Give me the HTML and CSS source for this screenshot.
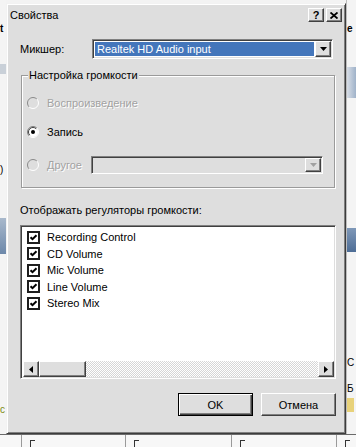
FILE: index.html
```html
<!DOCTYPE html>
<html lang="ru">

<head>
    <meta charset="utf-8">
    <title>Свойства</title>
    <link rel="stylesheet" href="styles.css">
</head>

<body>
    <div class="screen">
        <div class="top">
            <div class="side side-left">
                <span class="frag frag-t">t</span>
                <div class="blk blk-l1"></div>
                <span class="frag frag-p">)</span>
                <div class="blk blk-l2"></div>
                <span class="frag frag-c">c</span>
            </div>

            <div class="dialog">
                <div class="titlebar">
                    <span class="title">Свойства</span>
                    <span class="tb-btn help">?</span>
                    <span class="tb-btn close">
                        <svg width="8" height="7" viewBox="0 0 8 7"><path d="M0.5 0.5L7.5 6.5M7.5 0.5L0.5 6.5" stroke="#000" stroke-width="1.8"/></svg>
                    </span>
                </div>

                <div class="content">
                    <div class="mixer-row">
                        <span class="mixer-label">Микшер:</span>
                        <div class="combo sunken">
                            <span class="combo-value">Realtek HD Audio input</span>
                            <span class="drop raised">
                                <svg width="7" height="4" viewBox="0 0 7 4"><path d="M0 0h7L3.5 4z" fill="#000"/></svg>
                            </span>
                        </div>
                    </div>

                    <div class="group">
                        <span class="group-title">Настройка громкости</span>
                        <div class="radio-row">
                            <svg class="radio" width="12" height="12" viewBox="0 0 12 12">
                                <circle cx="6" cy="6" r="5" fill="#dedede"/>
                                <path d="M2.1 9.9A5.5 5.5 0 0 1 9.9 2.1" fill="none" stroke="#8a8a8a"/>
                                <path d="M9.9 2.1A5.5 5.5 0 0 1 2.1 9.9" fill="none" stroke="#fff"/>
                            </svg>
                            <span class="disabled">Воспроизведение</span>
                        </div>
                        <div class="radio-row second">
                            <svg class="radio" width="12" height="12" viewBox="0 0 12 12">
                                <circle cx="6" cy="6" r="5" fill="#fff"/>
                                <path d="M2.1 9.9A5.5 5.5 0 0 1 9.9 2.1" fill="none" stroke="#808080"/>
                                <path d="M2.8 9.2A4.5 4.5 0 0 1 9.2 2.8" fill="none" stroke="#404040"/>
                                <path d="M9.9 2.1A5.5 5.5 0 0 1 2.1 9.9" fill="none" stroke="#fff"/>
                                <circle cx="6" cy="6" r="2" fill="#000"/>
                            </svg>
                            <span>Запись</span>
                        </div>
                        <div class="radio-row third">
                            <svg class="radio" width="12" height="12" viewBox="0 0 12 12">
                                <circle cx="6" cy="6" r="5" fill="#dedede"/>
                                <path d="M2.1 9.9A5.5 5.5 0 0 1 9.9 2.1" fill="none" stroke="#8a8a8a"/>
                                <path d="M9.9 2.1A5.5 5.5 0 0 1 2.1 9.9" fill="none" stroke="#fff"/>
                            </svg>
                            <span class="disabled">Другое</span>
                            <div class="combo combo-off sunken">
                                <span class="combo-value off"></span>
                                <span class="drop raised">
                                    <svg width="7" height="4" viewBox="0 0 7 4"><path d="M0 0h7L3.5 4z" fill="#a0a0a0"/></svg>
                                </span>
                            </div>
                        </div>
                    </div>

                    <div class="list-label">Отображать регуляторы громкости:</div>

                    <div class="listbox sunken">
                        <div class="items">
                            <div class="item"><svg class="check" width="13" height="13" viewBox="0 0 13 13"><rect x="1" y="1" width="11" height="11" fill="#fff" stroke="#1e1e1e" stroke-width="2"/><path d="M3.5 6.2l2 2 4-4" fill="none" stroke="#000" stroke-width="2"/></svg><span>Recording Control</span></div>
                            <div class="item"><svg class="check" width="13" height="13" viewBox="0 0 13 13"><rect x="1" y="1" width="11" height="11" fill="#fff" stroke="#1e1e1e" stroke-width="2"/><path d="M3.5 6.2l2 2 4-4" fill="none" stroke="#000" stroke-width="2"/></svg><span>CD Volume</span></div>
                            <div class="item"><svg class="check" width="13" height="13" viewBox="0 0 13 13"><rect x="1" y="1" width="11" height="11" fill="#fff" stroke="#1e1e1e" stroke-width="2"/><path d="M3.5 6.2l2 2 4-4" fill="none" stroke="#000" stroke-width="2"/></svg><span>Mic Volume</span></div>
                            <div class="item"><svg class="check" width="13" height="13" viewBox="0 0 13 13"><rect x="1" y="1" width="11" height="11" fill="#fff" stroke="#1e1e1e" stroke-width="2"/><path d="M3.5 6.2l2 2 4-4" fill="none" stroke="#000" stroke-width="2"/></svg><span>Line Volume</span></div>
                            <div class="item"><svg class="check" width="13" height="13" viewBox="0 0 13 13"><rect x="1" y="1" width="11" height="11" fill="#fff" stroke="#1e1e1e" stroke-width="2"/><path d="M3.5 6.2l2 2 4-4" fill="none" stroke="#000" stroke-width="2"/></svg><span>Stereo Mix</span></div>
                        </div>
                        <div class="scrollbar">
                            <span class="sb-btn raised">
                                <svg width="4" height="7" viewBox="0 0 4 7"><path d="M4 0v7L0 3.5z" fill="#000"/></svg>
                            </span>
                            <span class="thumb raised"></span>
                            <span class="track"></span>
                            <span class="sb-btn raised">
                                <svg width="4" height="7" viewBox="0 0 4 7"><path d="M0 0v7L4 3.5z" fill="#000"/></svg>
                            </span>
                        </div>
                    </div>

                    <div class="buttons">
                        <span class="btn default">OK</span>
                        <span class="btn raised">Отмена</span>
                    </div>
                </div>
            </div>

            <div class="side side-right">
                <span class="frag frag-e">е</span>
                <div class="blk blk-r1"></div>
                <div class="blk blk-r2"></div>
                <span class="frag frag-s">С</span>
                <span class="frag frag-b">Б</span>
                <div class="blk blk-r3"></div>
            </div>
        </div>

        <div class="under">
            <div class="cell c0"></div>
            <div class="cell c1"><span class="mark"></span></div>
            <div class="cell c2"><span class="mark"></span></div>
            <div class="cell c3"><span class="mark"></span></div>
            <div class="cell c4"><span class="mark"></span></div>
        </div>
    </div>
</body>

</html>
```

FILE: styles.css
```css
* {
    margin: 0;
    padding: 0;
    box-sizing: border-box;
}

body {
    width: 356px;
    height: 447px;
    overflow: hidden;
    background: #f3f3f3;
    font-family: "Liberation Sans", Arial, sans-serif;
    font-size: 11px;
    color: #000;
}

.screen {
    display: flex;
    flex-direction: column;
    height: 447px;
}

.top {
    display: flex;
    height: 434px;
}

/* bits of the window behind the dialog */
.side {
    display: flex;
    flex-direction: column;
    overflow: hidden;
    background: #f4f4f4;
}

.side-left {
    width: 6px;
}

.side-right {
    width: 10px;
    border-left: 1px solid #bdbdbd;
}

.frag {
    line-height: 10px;
    font-size: 10px;
}

.frag-t {
    margin-top: 24px;
    font-weight: bold;
}

.blk-l1 {
    margin-top: 30px;
    height: 10px;
    background: #c9d0d8;
}

.frag-p {
    margin-top: 91px;
}

.blk-l2 {
    margin-top: 43px;
    height: 36px;
    background: linear-gradient(#a9b9cc, #6d88aa);
}

.frag-c {
    margin-top: 151px;
    color: #7a8a10;
}

.frag-e {
    margin-top: 24px;
    font-weight: bold;
}

.blk-r1 {
    margin-top: 33px;
    height: 31px;
    background: linear-gradient(90deg, #d7dde6, #9fb2c9);
}

.blk-r2 {
    margin-top: 130px;
    height: 24px;
    background: linear-gradient(#7f98b8, #4d6d96);
}

.frag-s {
    margin-top: 106px;
}

.frag-b {
    margin-top: 16px;
}

.blk-r3 {
    margin-top: 4px;
    height: 14px;
    width: 7px;
    background: #e8d27a;
}

/* dialog */
.dialog {
    width: 340px;
    height: 431px;
    margin-top: 3px;
    padding: 1px;
    background: #dedede;
    border: 1px solid;
    border-color: #f2f2f2 #3c3c3c #3c3c3c #f2f2f2;
    box-shadow: inset 1px 1px #fff, inset -1px -1px #808080;
    display: flex;
    flex-direction: column;
}

.titlebar {
    height: 20px;
    display: flex;
    align-items: center;
    padding: 0 2px;
}

.title {
    flex: 1;
    line-height: 13px;
}

.raised,
.tb-btn {
    background: #dedede;
    border: 1px solid;
    border-color: #fff #404040 #404040 #fff;
    box-shadow: inset -1px -1px #808080;
}

.tb-btn {
    width: 16px;
    height: 14px;
    margin-left: 2px;
    display: flex;
    justify-content: center;
    align-items: center;
    font-weight: bold;
    font-size: 11px;
    line-height: 12px;
}

.sunken {
    border: 1px solid;
    border-color: #808080 #fff #fff #808080;
    box-shadow: inset 1px 1px #404040, inset -1px -1px #dedede;
}

.content {
    flex: 1;
    display: flex;
    flex-direction: column;
    padding: 14px 8px 0 12px;
}

.mixer-row {
    display: flex;
    align-items: center;
    height: 20px;
}

.mixer-label {
    width: 72px;
}

.combo {
    flex: 1;
    height: 20px;
    margin-right: 3px;
    padding: 1px;
    background: #fff;
    display: flex;
}

.combo-value {
    flex: 1;
    margin: 1px;
    padding-left: 2px;
    line-height: 14px;
    background: #4476bb;
    color: #fff;
}

.combo-value.off {
    background: #dedede;
}

.drop {
    width: 16px;
    display: flex;
    justify-content: center;
    align-items: center;
}

/* group box */
.group {
    position: relative;
    margin: 16px 1px 0 1px;
    padding: 19px 11px 13px 5px;
    border: 1px solid #9a9a9a;
    box-shadow: 1px 1px #fff, inset 1px 1px #fff;
    display: flex;
    flex-direction: column;
}

.group-title {
    position: absolute;
    top: -7px;
    left: 6px;
    padding: 0 1px;
    line-height: 13px;
    background: #dedede;
}

.radio-row {
    display: flex;
    align-items: center;
    gap: 8px;
    height: 16px;
}

.radio-row.second {
    margin-top: 13px;
}

.radio-row.third {
    margin-top: 16px;
    height: 18px;
}

.disabled {
    color: #a2a2a2;
    text-shadow: 1px 1px 0 #fff;
}

.combo-off {
    height: 18px;
    margin: 0 0 0 1px;
    background: #dedede;
}

.list-label {
    margin-top: 16px;
    line-height: 13px;
}

/* list */
.listbox {
    margin-top: 8px;
    height: 154px;
    padding: 1px;
    background: #fff;
    display: flex;
    flex-direction: column;
}

.items {
    flex: 1;
    padding: 2px 0 0 5px;
}

.item {
    display: flex;
    align-items: center;
    gap: 7px;
    height: 16.5px;
}

.scrollbar {
    height: 16px;
    display: flex;
    margin-left: 1px;
}

.sb-btn {
    width: 16px;
    display: flex;
    justify-content: center;
    align-items: center;
}

.thumb {
    width: 47px;
}

.track {
    flex: 1;
    background: repeating-conic-gradient(#fff 0 25%, #d6d6d6 0 50%) 0 0 / 2px 2px;
}

.buttons {
    display: flex;
    justify-content: flex-end;
    gap: 8px;
    margin-top: 14px;
}

.btn {
    width: 75px;
    height: 23px;
    display: flex;
    justify-content: center;
    align-items: center;
}

.btn.default {
    border: 1px solid #000;
    box-shadow: inset 1px 1px #fff, inset -1px -1px #404040, inset -2px -2px #808080;
}

/* strip under the dialog */
.under {
    flex: 1;
    display: flex;
    background: #f7f7f7;
    border-top: 1px solid #6a6a6a;
}

.cell {
    border-left: 1px solid #9a9a9a;
    padding: 5px 0 0 8px;
}

.c0 {
    width: 21px;
    border-left: none;
}

.c1 {
    width: 104px;
}

.c2 {
    width: 106px;
}

.c3 {
    width: 105px;
}

.c4 {
    flex: 1;
}

.mark {
    display: block;
    width: 5px;
    height: 8px;
    border-top: 1px solid #333;
    border-left: 1px solid #333;
}
```
